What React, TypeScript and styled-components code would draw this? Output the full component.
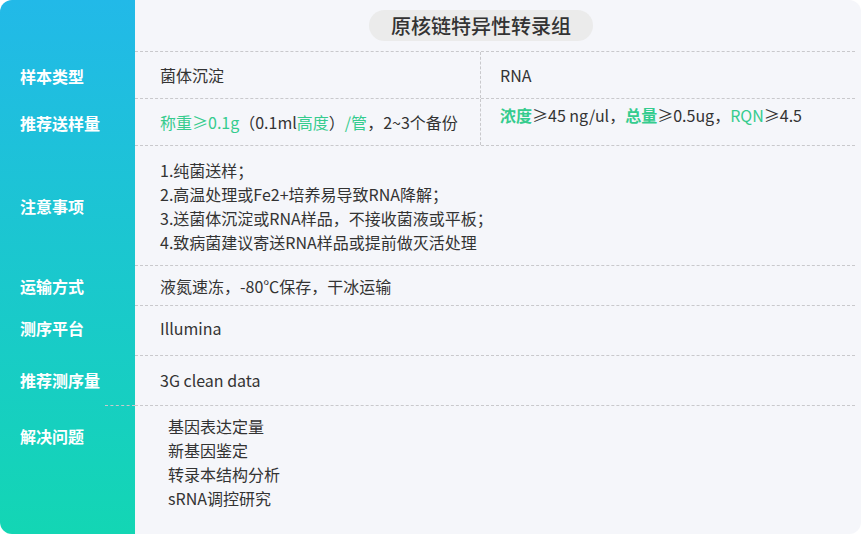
import * as React from "react";
import styled, { createGlobalStyle } from "styled-components";

const GlobalStyle = createGlobalStyle`
  html, body {
    margin: 0;
    padding: 0;
    background: #fff;
  }
  body {
    font-family: "Noto Sans CJK SC", "Noto Sans", sans-serif;
  }
`;

const GREEN = "#35cc8e";
const LINE = "1px dashed #c9c9cc";

const Card = styled.div`
  width: 861px;
  height: 534px;
  border-radius: 12px;
  overflow: hidden;
  background: linear-gradient(180deg, #22b9e8 0%, #13d6b4 100%) 0 0 / 135px 100% no-repeat,
    #f5f6fa;
  display: flex;
  flex-direction: column;
  color: #333;
`;

const Row = styled.div<{ $h?: number }>`
  display: grid;
  grid-template-columns: 135px 1fr;
  height: ${(p) => (p.$h ? `${p.$h}px` : "auto")};
  flex: ${(p) => (p.$h ? "none" : "1")};
`;

const Label = styled.div<{ $top?: number; $up?: number }>`
  display: flex;
  align-items: ${(p) => (p.$top !== undefined ? "flex-start" : "center")};
  padding: ${(p) => (p.$top !== undefined ? `${p.$top}px 0 0 20px` : `0 0 ${p.$up ?? 0}px 20px`)};
  font-size: 16px;
  font-weight: 700;
  line-height: 24px;
  color: #fff;
`;

const Cell = styled.div<{ $last?: boolean; $bleed?: boolean }>`
  position: relative;
  box-sizing: border-box;
  margin-right: 6px;
  border-bottom: ${(p) => (p.$last ? "none" : LINE)};
  display: flex;
  align-items: center;
  font-size: 16px;
  line-height: 24px;
  &::before {
    content: "";
    display: ${(p) => (p.$bleed ? "block" : "none")};
    position: absolute;
    left: -30px;
    top: -1px;
    width: 30px;
    border-top: ${LINE};
  }
`;

const Split = styled.div`
  display: grid;
  grid-template-columns: 346px 1fr;
  width: 100%;
  height: 100%;
`;

const Part = styled.div<{ $divider?: boolean; $pad: number; $top?: boolean }>`
  display: flex;
  align-items: ${(p) => (p.$top ? "flex-start" : "center")};
  padding: ${(p) => (p.$top ? "4px" : "0")} 0 0 ${(p) => p.$pad}px;
  border-right: ${(p) => (p.$divider ? LINE : "none")};
`;

const Text = styled.div<{ $up?: number }>`
  padding-left: 25px;
  margin-bottom: ${(p) => p.$up ?? 0}px;
`;

const List = styled.div<{ $pad: number; $top?: number }>`
  align-self: ${(p) => (p.$top !== undefined ? "flex-start" : "center")};
  padding: ${(p) => p.$top ?? 0}px 0 0 ${(p) => p.$pad}px;
  display: flex;
  flex-direction: column;
`;

const Title = styled.div`
  margin-left: 234px;
  height: 31px;
  padding: 0 22px;
  border-radius: 16px;
  background: #ebebeb;
  font-size: 20px;
  font-weight: 500;
  line-height: 31px;
  color: #333;
`;

const Hi = styled.span<{ $bold?: boolean }>`
  color: ${GREEN};
  font-weight: ${(p) => (p.$bold ? 700 : 400)};
`;

export default function App() {
  return (
    <>
      <GlobalStyle />
      <Card>
        <Row $h={52}>
          <div />
          <Cell>
            <Title>原核链特异性转录组</Title>
          </Cell>
        </Row>
        <Row $h={47}>
          <Label>样本类型</Label>
          <Cell>
            <Split>
              <Part $divider $pad={25}>菌体沉淀</Part>
              <Part $pad={19}>RNA</Part>
            </Split>
          </Cell>
        </Row>
        <Row $h={47}>
          <Label>推荐送样量</Label>
          <Cell>
            <Split>
              <Part $divider $pad={25}>
                <span>
                  <Hi>称重≥0.1g</Hi>（0.1ml<Hi>高度</Hi>）<Hi>/管</Hi>，2~3个备份
                </span>
              </Part>
              <Part $pad={19} $top>
                <span>
                  <Hi $bold>浓度</Hi>≥45 ng/ul，<Hi $bold>总量</Hi>≥0.5ug，<Hi>RQN</Hi>≥4.5
                </span>
              </Part>
            </Split>
          </Cell>
        </Row>
        <Row $h={120}>
          <Label>注意事项</Label>
          <Cell>
            <List $pad={25}>
              <span>1.纯菌送样；</span>
              <span>2.高温处理或Fe2+培养易导致RNA降解；</span>
              <span>3.送菌体沉淀或RNA样品，不接收菌液或平板；</span>
              <span>4.致病菌建议寄送RNA样品或提前做灭活处理</span>
            </List>
          </Cell>
        </Row>
        <Row $h={40}>
          <Label>运输方式</Label>
          <Cell>
            <Text>液氮速冻，-80℃保存，干冰运输</Text>
          </Cell>
        </Row>
        <Row $h={50}>
          <Label $up={6}>测序平台</Label>
          <Cell>
            <Text $up={6}>Illumina</Text>
          </Cell>
        </Row>
        <Row $h={50}>
          <Label $up={2}>推荐测序量</Label>
          <Cell>
            <Text $up={2}>3G clean data</Text>
          </Cell>
        </Row>
        <Row>
          <Label $top={18}>解决问题</Label>
          <Cell $last $bleed>
            <List $pad={33} $top={8}>
              <span>基因表达定量</span>
              <span>新基因鉴定</span>
              <span>转录本结构分析</span>
              <span>sRNA调控研究</span>
            </List>
          </Cell>
        </Row>
      </Card>
    </>
  );
}
